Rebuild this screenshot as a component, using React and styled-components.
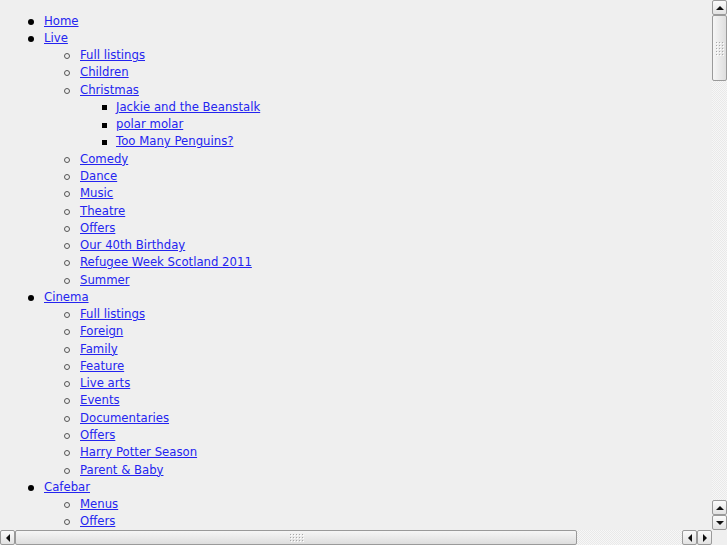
import React from "react";
import styled, { css, createGlobalStyle } from "styled-components";

const GlobalStyle = createGlobalStyle`
  html, body {
    margin: 0;
    padding: 0;
    background: #efefef;
  }
`;

const menu = [
  { label: "Home" },
  {
    label: "Live",
    children: [
      { label: "Full listings" },
      { label: "Children" },
      {
        label: "Christmas",
        children: [
          { label: "Jackie and the Beanstalk" },
          { label: "polar molar" },
          { label: "Too Many Penguins?" },
        ],
      },
      { label: "Comedy" },
      { label: "Dance" },
      { label: "Music" },
      { label: "Theatre" },
      { label: "Offers" },
      { label: "Our 40th Birthday" },
      { label: "Refugee Week Scotland 2011" },
      { label: "Summer" },
    ],
  },
  {
    label: "Cinema",
    children: [
      { label: "Full listings" },
      { label: "Foreign" },
      { label: "Family" },
      { label: "Feature" },
      { label: "Live arts" },
      { label: "Events" },
      { label: "Documentaries" },
      { label: "Offers" },
      { label: "Harry Potter Season" },
      { label: "Parent & Baby" },
    ],
  },
  {
    label: "Cafebar",
    children: [{ label: "Menus" }, { label: "Offers" }],
  },
];

const Page = styled.div`
  width: 727px;
  height: 545px;
  display: grid;
  grid-template-columns: 1fr 15px;
  grid-template-rows: 1fr 15px;
  overflow: hidden;
  background: #efefef;
`;

const Viewport = styled.div`
  overflow: hidden;
  padding: 12.6px 0 0 8px;
  font-family: "DejaVu Sans", sans-serif;
  font-size: 11.7px;
  line-height: 17.26px;
  color: #000;
`;

const List = styled.ul`
  margin: 0;
  padding-left: 36px;
  list-style: none;
`;

const bullets = {
  disc: css`
    left: -16px;
    width: 6px;
    height: 6px;
    border-radius: 50%;
    background: #000;
  `,
  circle: css`
    left: -16px;
    width: 6px;
    height: 6px;
    box-sizing: border-box;
    border: 1.5px solid #555;
    border-radius: 50%;
  `,
  square: css`
    left: -14px;
    width: 5px;
    height: 5px;
    margin-top: 0.5px;
    background: #000;
  `,
};

const Item = styled.li`
  position: relative;

  &::before {
    content: "";
    position: absolute;
    top: 6px;
    ${(p) => bullets[p.$bullet]}
  }
`;

const Link = styled.a`
  color: #2424f0;
  text-decoration: underline;
`;

const ScrollBar = styled.div`
  display: flex;
  flex-direction: ${(p) => (p.$vertical ? "column" : "row")};
  background: #efefef;
`;

const Track = styled.div`
  flex: 1;
  background-color: #f7f7f7;
  background-image: repeating-conic-gradient(#e9e9e9 0 25%, #f7f7f7 0 50%);
  background-size: 2px 2px;
`;

const Button = styled.div`
  flex: 0 0 15px;
  box-sizing: border-box;
  width: 15px;
  height: 15px;
  border: 1px solid #9a9a9a;
  border-radius: 2px;
  background: linear-gradient(to bottom, #fbfbfb, #e2e2e2);
  display: flex;
  align-items: center;
  justify-content: center;
`;

const Arrow = styled.span`
  width: 0;
  height: 0;
  border-style: solid;
  border-color: transparent;
  ${(p) =>
    p.$dir === "up"
      ? "border-width: 0 4px 4px 4px; border-bottom-color: #111;"
      : p.$dir === "down"
      ? "border-width: 4px 4px 0 4px; border-top-color: #111;"
      : p.$dir === "left"
      ? "border-width: 4px 4px 4px 0; border-right-color: #111;"
      : "border-width: 4px 0 4px 4px; border-left-color: #111;"}
`;

const Thumb = styled.div`
  flex: 0 0 ${(p) => p.$size}px;
  box-sizing: border-box;
  border: 1px solid #9a9a9a;
  border-radius: 2px;
  background: ${(p) =>
    p.$vertical
      ? "linear-gradient(to right, #f6f6f6, #dedede)"
      : "linear-gradient(to bottom, #f6f6f6, #dedede)"};
  display: flex;
  align-items: center;
  justify-content: center;
`;

const Grip = styled.div`
  display: grid;
  grid-template-columns: repeat(${(p) => p.$cols}, 1px);
  grid-template-rows: repeat(${(p) => p.$rows}, 1px);
  gap: 2px;
`;

const Dot = styled.span`
  width: 1px;
  height: 1px;
  background: #a8a8a8;
  box-shadow: 1px 1px 0 #ffffff;
`;

const Corner = styled.div`
  background: #efefef;
`;

const levelBullet = ["disc", "circle", "square"];

function Menu({ items, level }) {
  return (
    <List>
      {items.map((item, i) => (
        <Item key={i} $bullet={levelBullet[Math.min(level, 2)]}>
          <Link href="#">{item.label}</Link>
          {item.children && <Menu items={item.children} level={level + 1} />}
        </Item>
      ))}
    </List>
  );
}

function GripDots({ cols, rows }) {
  return (
    <Grip $cols={cols} $rows={rows}>
      {Array.from({ length: cols * rows }).map((_, i) => (
        <Dot key={i} />
      ))}
    </Grip>
  );
}

export default function App() {
  return (
    <>
      <GlobalStyle />
      <Page>
        <Viewport>
          <Menu items={menu} level={0} />
        </Viewport>
        <ScrollBar $vertical>
          <Button>
            <Arrow $dir="up" />
          </Button>
          <Thumb $vertical $size={66}>
            <GripDots cols={3} rows={5} />
          </Thumb>
          <Track />
          <Button>
            <Arrow $dir="up" />
          </Button>
          <Button>
            <Arrow $dir="down" />
          </Button>
        </ScrollBar>
        <ScrollBar>
          <Button>
            <Arrow $dir="left" />
          </Button>
          <Thumb $size={562}>
            <GripDots cols={5} rows={3} />
          </Thumb>
          <Track />
          <Button>
            <Arrow $dir="left" />
          </Button>
          <Button>
            <Arrow $dir="right" />
          </Button>
        </ScrollBar>
        <Corner />
      </Page>
    </>
  );
}
